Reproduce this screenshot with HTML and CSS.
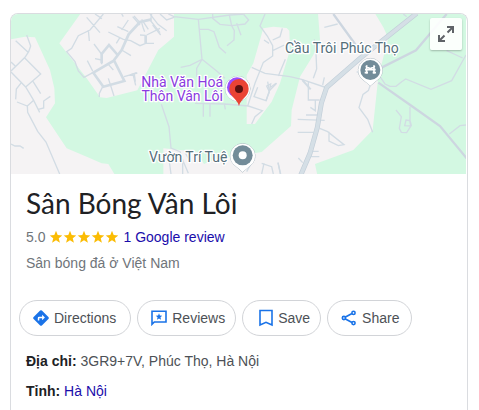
FILE: index.html
```html
<!DOCTYPE html>
<html lang="vi">
<head>
<meta charset="utf-8">
<meta name="viewport" content="width=device-width, initial-scale=1">
<title>Sân Bóng Vân Lôi</title>
<link rel="stylesheet" href="styles.css">
</head>
<body>
<main class="card">
  <div class="map">
    <svg class="map-canvas" viewBox="33 42 1365 480" preserveAspectRatio="xMidYMid slice" role="img" aria-label="Map">
      <rect class="green" x="0" y="0" width="1500" height="600"/>
      <g class="land">
        <path d="M30 118 75 110 105 112 150 210 163 265 165 310 138 352 200 445 260 470 305 490 325 492 345 525H30Z"/>
        <path d="M242 40 178 130 260 235 300 292 320 294 412 271 475 150 522 110V40Z"/>
        <path d="M790 85 820 80 860 84 868 92 870 150 840 250 815 305 785 345 765 372 740 372V225L760 190Z"/>
        <path d="M490 445 590 455 612 492 640 480 700 470 785 456 873 378 875 330 900 230 940 165 960 120 954 40H1125L1150 82 1165 115 1135 230 1118 390 1060 450 945 492 952 525H490Z"/>
      </g>
      <g class="roads">
        <path d="M80 105 92 138 86 155 75 172 33 213M47 122 86 158M33 186 48 200M75 175 122 222 77 261M33 216 77 261 101 301 119 337M64 248 49 267 47 298M99 244 122 281M51 306 82 318 101 301M115 328 131 324 131 303 151 289M82 318 83 337 113 394 138 426 179 522M33 432 45 438 60 438 71 445"/>
        <path d="M310 42 270 90 235 107 215 145 200 155 225 185 235 213 252 232 280 217M260 52 300 98M265 90 268 123M285 42 306 56M325 96 370 118 392 122 420 137 437 130H462M365 42 370 50M385 60 365 90M352 80 385 95M360 112 349 130M365 150 393 167M282 132 305 163V193M285 176 305 180M262 182 278 213M325 193 340 210M372 230 412 219M399 222 407 256M308 260 298 280V291M325 235 342 288M402 48 420 68M425 68 430 85 434 95M440 105 480 85M450 60 480 98M455 42 452 60M420 105 437 106"/>
        <g transform="translate(390 0)">
          <path d="M115 42 132 50 205 58 300 45 345 42M205 58 216 178 180 196 152 202M216 178 260 213 285 235M216 178 200 205V230M208 88H235L252 95 268 142 288 160M60 42 84 73 110 92M68 75 92 105M35 58 55 88M8 50 30 75M90 42 110 60 132 52M248 42V55L270 73 305 77 313 92 312 120 291 137M305 77 298 45M305 77 345 72 356 60 340 42M320 70 333 106M0 225 20 218M13 222 16 245M195 310 285 312 355 318 397 332 375 350 365 372M220 312V350M240 312V350M283 312 286 328M94 313 117 380 123 444 150 455 158 480V522M158 480 175 520M118 485 123 522M165 457 178 480M375 470 350 515M395 490 425 500 430 522M444 488 451 522"/>
          <path d="M405 42 390 78 412 108 428 137V168L400 187 375 250 353 318M365 202 405 220 480 230M402 120 417 130M428 152 463 135M457 85 450 110 428 120M466 178 445 228M383 262 372 290 408 302 418 272 413 245M418 272 440 250"/>
        </g>
        <g transform="translate(780 0)">
          <path d="M193 82 233 72M163 118 168 160 170 207 160 235M90 230 125 238 193 261M193 232 188 255M145 245V300H179M166 300V332L151 322M113 358 194 361M138 345H178M113 397H160M179 385 203 395 252 434 235 437 207 423V395M153 454H176M151 470H178M115 474 128 488M54 488 62 522M12 490 5 522M330 258 325 272 309 283 297 323 323 358 338 397M290 216H305M360 230 375 252 390 259H408L425 245 437 237 513 268 575 242 618 165M560 152 608 174M408 330 424 350 418 385 424 397 440 398 454 376 450 362V320M438 360 449 362 452 378 434 377ZM568 402 600 377 618 375M430 42 440 50"/>
          <path class="dead" d="M127 240 152 268"/>
          <path d="M20 258 32 252 28 275ZM28 275 18 303M32 262 48 250"/>
        </g>
      </g>
      <g class="streets">
        <path d="M455 58 420 66 386 103 365 150 340 183 280 218 310 260 373 243 343 183M305 190V162L327 135 353 165M437 106V130"/>
      </g>
      <g transform="translate(780 0)">
        <path class="avenue" d="M220 42 298 150M360 205 468 151 560 42M355 248 455 318 540 378 620 475"/>
        <path class="highway-edge" d="M470 40 300 175 200 262 184 310 172 382 150 460 122 526"/>
        <path class="highway" d="M470 40 300 175 200 262 184 310 172 382 150 460 122 526"/>
      </g>
      <g class="label poi-purple" text-anchor="end">
        <text x="669" y="262">Nhà Văn Hoá</text>
        <text x="669" y="303">Thôn Vân Lôi</text>
      </g>
      <text class="label poi-gray" x="447" y="487">Vườn Trí Tuệ</text>
      <text class="label poi-gray" x="855" y="160">Cầu Trôi Phúc Thọ</text>
      <circle class="pin-halo" cx="713" cy="266" r="37"/>
      <circle cx="711" cy="262" r="30" fill="#9b4dff"/>
      <path d="M717 318C711 294 688 290 688 266A29 29 0 0 1 746 266C746 290 723 294 717 318Z" fill="#ea4335"/>
      <circle cx="717" cy="267" r="12" fill="#5c1010"/>
      <path class="pin-halo" d="M728 516 699 491A37 37 0 1 1 757 491Z"/>
      <circle cx="728" cy="466" r="30" fill="#738c99"/>
      <circle cx="728" cy="466" r="12" fill="#fff"/>
      <path class="pin-halo" d="M1111 257 1083 234A36 36 0 1 1 1139 234Z"/>
      <circle cx="1111" cy="210" r="30" fill="#738c99"/>
      <path d="M1100 196V221M1122 196V221M1097 199 1111 206 1125 199M1095 209H1127M1094 218H1104M1118 218H1128" fill="none" stroke="#fff" stroke-width="5"/>
    </svg>
    <button class="expand" type="button" aria-label="Expand map">
      <svg viewBox="0 0 18 18" width="18" height="18" aria-hidden="true"><path d="M10 2H16V8M16 2l-5.500 5.500M2 10V16h6M2 16l5.500-5.500"/></svg>
    </button>
  </div>

  <header class="heading">
    <h1>Sân Bóng Vân Lôi</h1>
    <div class="rating">
      <span>5.0</span>
      <svg class="stars" viewBox="0 0 70 14" width="70" height="14" role="img" aria-label="5 / 5">
        <defs><path id="star" d="M7 .8 8.700 5.100 13.300 5.400 9.750 8.350 10.900 12.800 7 10.300 3.100 12.800 4.250 8.350 .7 5.400 5.300 5.100Z"/></defs>
        <use href="#star"/><use href="#star" x="14"/><use href="#star" x="28"/><use href="#star" x="42"/><use href="#star" x="56"/>
      </svg>
      <a href="#reviews">1 Google review</a>
    </div>
    <p class="category">Sân bóng đá ở Việt Nam</p>
  </header>

  <div class="actions">
    <button class="chip directions" type="button">
      <svg viewBox="0 0 16 16" width="16" height="16" aria-hidden="true"><path fill="#1a73e8" d="M7.100.6a1.300 1.300 0 0 1 1.800 0l6.500 6.500a1.300 1.300 0 0 1 0 1.800l-6.500 6.500a1.300 1.300 0 0 1-1.800 0L.6 8.900a1.300 1.300 0 0 1 0-1.800Z"/><path fill="#fff" d="M4.800 10.500V8a1.300 1.300 0 0 1 1.300-1.300h3V4.800L11.900 7.500 9.100 10.200V8.200H6.300v2.300Z"/></svg>
      Directions
    </button>
    <button class="chip" type="button">
      <svg viewBox="0 0 16 16" width="16" height="16" aria-hidden="true"><path class="line" d="M1 14.300V1.300H15V12H3.300Z"/><path fill="#1a73e8" d="m8 3.300.9 2.300 2.400.2-1.850 1.500.6 2.400L8 8.400 5.950 9.700l.6-2.400L4.700 5.800l2.400-.2Z"/></svg>
      Reviews
    </button>
    <button class="chip save" type="button">
      <svg viewBox="0 0 14 18" width="14" height="18" aria-hidden="true"><path class="line" d="M1 1.500H13V16L7 13.300 1 16Z"/></svg>
      Save
    </button>
    <button class="chip share" type="button">
      <svg viewBox="0 0 16 16" width="16" height="16" aria-hidden="true"><path class="line" d="M4 7.200 11 3.500M4 8.800 11 12.500"/><circle class="line" cx="2.900" cy="8" r="1.600"/><circle class="line" cx="12.500" cy="2.900" r="1.600"/><circle class="line" cx="12.500" cy="13.100" r="1.600"/></svg>
      Share
    </button>
  </div>

  <dl class="facts">
    <div><dt>Địa chỉ:</dt> <dd>3GR9+7V, Phúc Thọ, Hà Nội</dd></div>
    <div><dt>Tỉnh:</dt> <dd><a href="#hanoi">Hà Nội</a></dd></div>
  </dl>
</main>
</body>
</html>
```

FILE: styles.css
```css
* {
  box-sizing: border-box;
}

body {
  margin: 0;
  padding: 13px 11px 0 10px;
  background: #fff;
  color: #4d5156;
  font: 14px/20px "Liberation Sans", Arial, sans-serif;
}

a {
  color: #1a0dab;
  text-decoration: none;
}

.card {
  min-height: calc(100vh - 13px);
  border: 1px solid #dadce0;
  border-bottom: 0;
  border-radius: 8px 8px 0 0;
  overflow: hidden;
}

.map {
  position: relative;
  height: 160px;
  margin-right: 1px;
}

.map-canvas {
  display: block;
  width: 100%;
  height: 100%;
}

.green {
  fill: #d3f8e2;
}

.land {
  fill: #f5f3f4;
}

.roads,
.streets,
.avenue,
.highway,
.highway-edge {
  fill: none;
  stroke: #d2dce4;
  stroke-width: 4;
}

.roads .dead {
  stroke-width: 6;
}

.streets {
  stroke-width: 8;
}

.avenue {
  stroke-width: 7;
  stroke: #cdd6e0;
}

.highway-edge {
  stroke: #c2ced8;
  stroke-width: 15;
}

.highway {
  stroke: #d5dfe6;
  stroke-width: 11;
}

.label {
  font-family: Roboto, sans-serif;
  font-size: 42px;
  stroke: #fff;
  stroke-width: 8px;
  stroke-linejoin: round;
  paint-order: stroke;
}

.poi-purple {
  fill: #8a3be0;
}

.poi-gray {
  fill: #546e7a;
}

.pin-halo {
  fill: #fff;
  stroke: #a9b7c0;
  stroke-width: 3;
  paint-order: stroke;
}

.expand {
  position: absolute;
  top: 4px;
  right: 4px;
  display: grid;
  place-items: center;
  width: 32px;
  height: 32px;
  padding: 0;
  border: 0;
  border-radius: 2px;
  background: rgba(255, 255, 255, 0.9);
  box-shadow: 0 1px 2px rgba(0, 0, 0, 0.25);
}

.expand path {
  fill: none;
  stroke: #5f6368;
  stroke-width: 2;
}

.heading {
  padding: 11px 15px 0;
}

h1 {
  margin: 0;
  color: #202124;
  font: 400 28px/36px Lato, sans-serif;
}

.rating {
  display: flex;
  align-items: center;
  gap: 4px;
  margin-top: 6px;
  color: #70757a;
}

.stars {
  fill: #fbbc04;
}

.category {
  margin: 6px 0 0;
  color: #70757a;
}

.actions {
  display: flex;
  flex-wrap: wrap;
  gap: 6px;
  padding: 27px 8px 0;
}

.chip {
  display: flex;
  align-items: center;
  gap: 5px;
  height: 36px;
  padding: 0 10px 0 13px;
  border: 1px solid #d2d4d8;
  border-radius: 18px;
  background: #fff;
  color: #4d5156;
  font: inherit;
}

.directions {
  padding-right: 14px;
}

.save {
  padding-left: 16px;
}

.share {
  padding-right: 12px;
}

.chip .line {
  fill: none;
  stroke: #1a73e8;
  stroke-width: 1.6;
}

.facts {
  display: grid;
  gap: 10px;
  margin: 15px 15px 0;
}

.facts dt,
.facts dd {
  display: inline;
  margin: 0;
}

.facts dt {
  color: #202124;
  font-weight: 700;
}
```
